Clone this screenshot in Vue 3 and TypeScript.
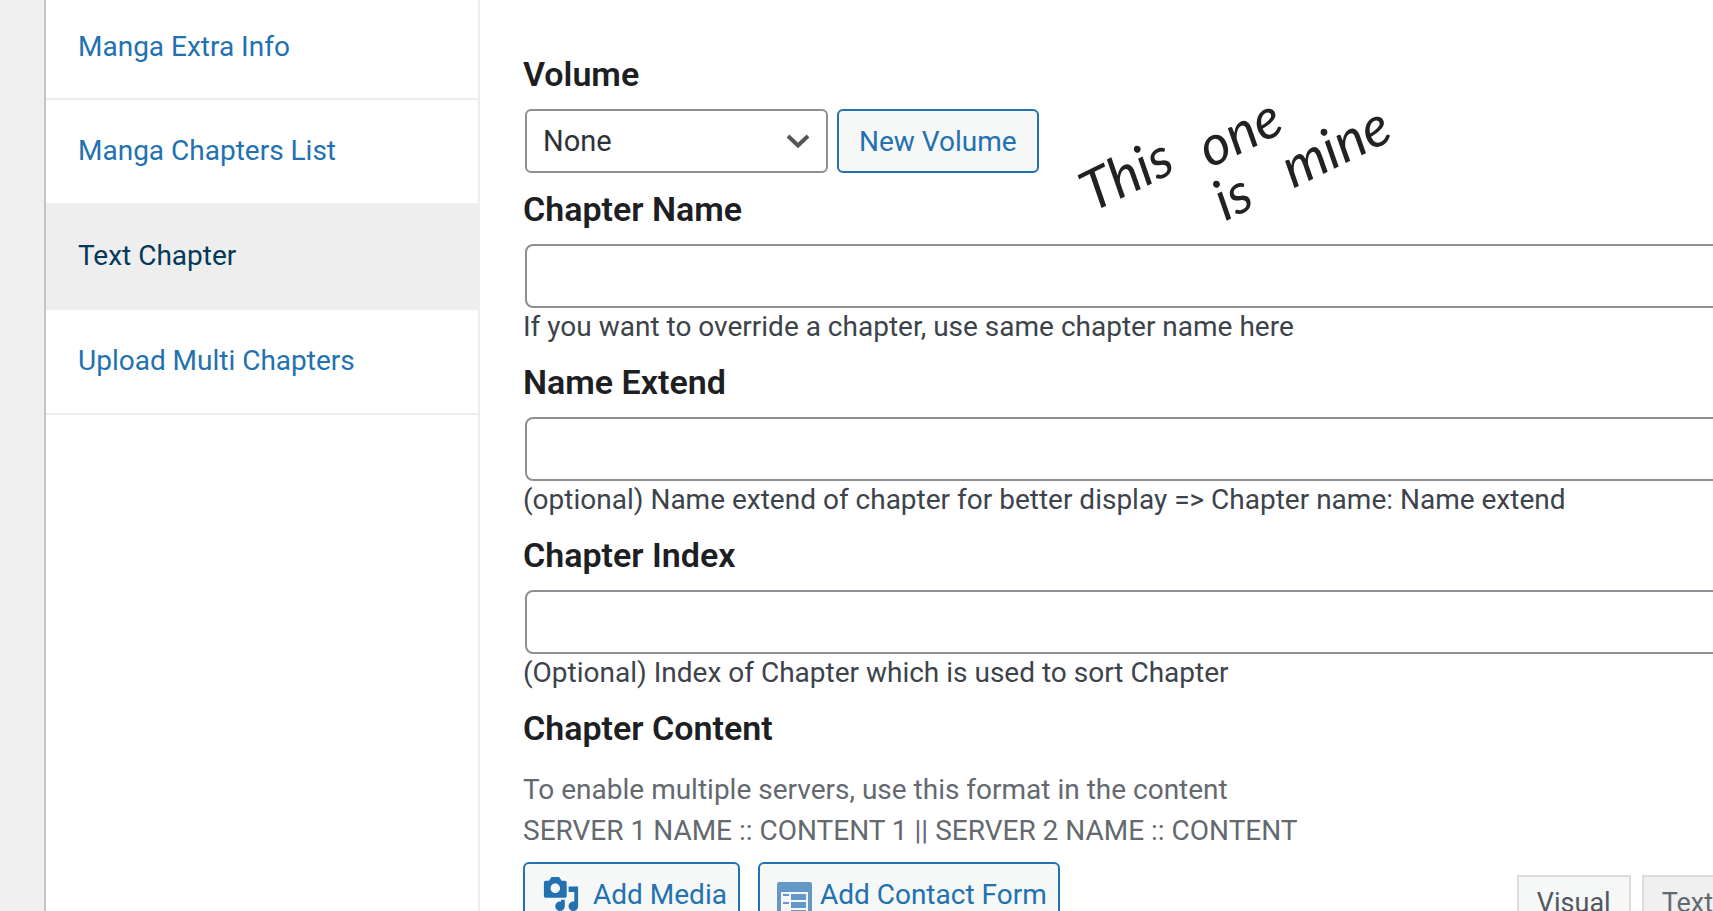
<script setup lang="ts">
import { ref } from 'vue'

interface Field {
  id: string
  label: string
  help: string
}

const tabs: string[] = ['Manga Extra Info', 'Manga Chapters List', 'Text Chapter', 'Upload Multi Chapters']
const activeTab = ref('Text Chapter')
const volume = ref('None')

const fields: Field[] = [
  { id: 'chapter-name', label: 'Chapter Name', help: 'If you want to override a chapter, use same chapter name here' },
  { id: 'name-extend', label: 'Name Extend', help: '(optional) Name extend of chapter for better display => Chapter name: Name extend' },
  { id: 'chapter-index', label: 'Chapter Index', help: '(Optional) Index of Chapter which is used to sort Chapter' },
]
const values = ref<Record<string, string>>({ 'chapter-name': '', 'name-extend': '', 'chapter-index': '' })
</script>

<template>
  <div class="page">
    <nav class="sidebar">
      <a
        v-for="tab in tabs"
        :key="tab"
        href="#"
        class="tab"
        :class="{ active: tab === activeTab }"
        @click.prevent="activeTab = tab"
      >{{ tab }}</a>
    </nav>
    <main class="content">
      <form class="form" @submit.prevent>
        <label class="heading" for="volume">Volume</label>
        <div class="volume-row">
          <div class="select-wrap">
            <select id="volume" v-model="volume">
              <option>None</option>
            </select>
            <svg class="chevron" viewBox="0 0 24 14" aria-hidden="true">
              <path d="M2 2l10 9.500 10-9.500" fill="none" stroke="#555" stroke-width="4" />
            </svg>
          </div>
          <button type="button" class="button">New Volume</button>
          <div class="note">
            <span class="word this">This</span>
            <span class="word one">one</span>
            <span class="word is">is</span>
            <span class="word mine">mine</span>
          </div>
        </div>

        <div v-for="field in fields" :key="field.id" class="field">
          <label class="heading" :for="field.id">{{ field.label }}</label>
          <input :id="field.id" v-model="values[field.id]" type="text" />
          <p class="help">{{ field.help }}</p>
        </div>

        <h2 class="heading">Chapter Content</h2>
        <p class="description">
          To enable multiple servers, use this format in the content<br />
          SERVER 1 NAME :: CONTENT 1 || SERVER 2 NAME :: CONTENT
        </p>
        <div class="editor-tools">
          <div class="media-buttons">
            <button type="button" class="button with-icon">
              <svg class="media-icon" viewBox="0 0 20 20" aria-hidden="true">
                <path fill="#2271b1" d="M13 11V4c0-.55-.45-1-1-1h-1.67L9 1H5L3.67 3H2c-.55 0-1 .45-1 1v7c0 .55.45 1 1 1h10c.55 0 1-.45 1-1zM7 4.500c1.380 0 2.500 1.120 2.500 2.500S8.380 9.500 7 9.500 4.500 8.380 4.500 7 5.620 4.500 7 4.500zM14 6h5v10.500c0 1.380-1.120 2.500-2.500 2.500S14 17.880 14 16.500s1.120-2.500 2.500-2.500c.17 0 .34.020.5.050V9h-3V6zm-4 8.050V13h2v3.500c0 1.380-1.120 2.500-2.500 2.500S7 17.880 7 16.500 8.120 14 9.500 14c.17 0 .34.020.5.050z" />
              </svg>
              Add Media
            </button>
            <button type="button" class="button with-icon contact">
              <svg class="form-icon" viewBox="0 0 35 35" aria-hidden="true">
                <path fill="#6398c7" d="M2 0h31a2 2 0 0 1 2 2v31a2 2 0 0 1-2 2H2a2 2 0 0 1-2-2V2a2 2 0 0 1 2-2z" />
                <path fill="#f6f7f7" d="M4 10h27v21H4z" />
                <path fill="#6398c7" d="M6 12h6v2H6zM14 12h15v6H14zM6 20h6v2H6zM14 20h15v6H14zM14 28h15v1H14z" />
              </svg>
              Add Contact Form
            </button>
          </div>
          <div class="editor-tabs">
            <button type="button" class="editor-tab current">Visual</button>
            <button type="button" class="editor-tab">Text</button>
          </div>
        </div>
      </form>
    </main>
  </div>
</template>

<style>
body {
  margin: 0;
}
</style>

<style scoped>
.page {
  display: flex;
  height: 100vh;
  overflow: hidden;
  box-sizing: border-box;
  padding-left: 44px;
  background: #f0f0f0;
  color: #3c434a;
  font-family: Roboto, "Liberation Sans", sans-serif;
  font-size: 28px;
}
.sidebar {
  flex: none;
  width: 432px;
  border-left: 2px solid #c3c4c7;
  border-right: 2px solid #eee;
  background: #fff;
}
.tab {
  display: block;
  box-sizing: border-box;
  height: 105px;
  padding: 31px 32px;
  border-bottom: 2px solid #eee;
  line-height: 40px;
  color: #2271b1;
  text-decoration: none;
}
.tab:first-child {
  height: 100px;
  padding-top: 27px;
}
.tab.active {
  background: #eee;
  color: #043959;
}
.content {
  flex: 1;
  min-width: 0;
  background: #fff;
}
.form {
  width: calc(100% + 20px);
  box-sizing: border-box;
  padding: 54px 0 0 43px;
}
.heading {
  display: block;
  margin: 0 0 15px;
  font-size: 34px;
  font-weight: 600;
  line-height: 40px;
  color: #1d2023;
}
.volume-row {
  position: relative;
  display: flex;
  gap: 9px;
  padding-left: 2px;
  margin-bottom: 16px;
}
.select-wrap {
  display: grid;
  align-items: center;
  width: 303px;
}
select,
.chevron {
  grid-area: 1 / 1;
}
select {
  appearance: none;
  box-sizing: border-box;
  height: 64px;
  padding: 0 16px;
  border: 2px solid #8c8f94;
  border-radius: 6px;
  background: #fff;
  color: #2c3338;
  font: inherit;
  font-size: 29px;
}
.chevron {
  justify-self: end;
  width: 24px;
  height: 14px;
  margin-right: 18px;
  pointer-events: none;
}
.button {
  box-sizing: border-box;
  height: 64px;
  padding: 0 20px;
  border: 2px solid #2271b1;
  border-radius: 6px;
  background: #f6f7f7;
  color: #2271b1;
  font: inherit;
  white-space: nowrap;
}
.note {
  position: absolute;
  left: 537px;
  top: -15px;
  width: 350px;
  height: 150px;
  color: #222;
  font-family: Lato, "Open Sans", sans-serif;
  font-size: 56px;
  font-style: italic;
  line-height: 54px;
}
.word {
  position: absolute;
  transform: rotate(-26deg);
}
.this {
  left: 18px;
  top: 52px;
}
.one {
  left: 136px;
  top: 10px;
}
.is {
  left: 154px;
  top: 74px;
}
.mine {
  left: 218px;
  top: 24px;
}
.field {
  margin-bottom: 16px;
}
.field input {
  display: block;
  box-sizing: border-box;
  width: calc(100% - 2px);
  height: 64px;
  margin-left: 2px;
  padding: 0 16px;
  border: 2px solid #8c8f94;
  border-radius: 8px;
  background: #fff;
  color: #2c3338;
  font: inherit;
}
.help {
  margin: 0;
  line-height: 38px;
}
h2.heading {
  margin-bottom: 21px;
}
.description {
  margin: 0 0 11px;
  line-height: 41px;
  color: #646970;
}
.editor-tools {
  display: flex;
  justify-content: space-between;
}
.media-buttons {
  display: flex;
  gap: 18px;
}
.with-icon {
  display: flex;
  align-items: center;
  gap: 13px;
  padding: 0 11px 0 17px;
}
.media-icon {
  width: 38px;
  height: 38px;
}
.contact {
  gap: 8px;
}
.form-icon {
  width: 35px;
  height: 35px;
  margin-top: 10px;
}
.editor-tabs {
  display: flex;
  gap: 11px;
  padding-top: 13px;
}
.editor-tab {
  box-sizing: border-box;
  height: 56px;
  padding: 0 18px;
  border: 2px solid #dcdcde;
  background: #f0f0f1;
  color: #646970;
  font: inherit;
  font-size: 27px;
}
.editor-tab.current {
  background: #f6f7f7;
  color: #50575e;
}
</style>
